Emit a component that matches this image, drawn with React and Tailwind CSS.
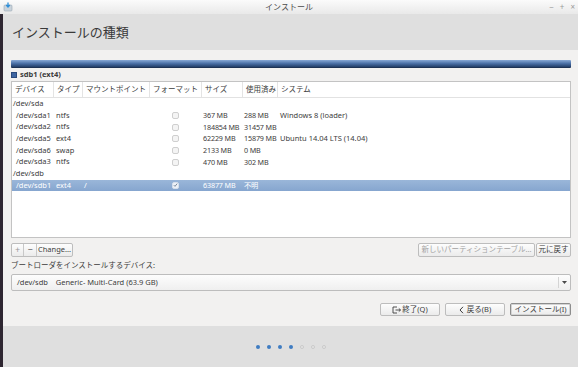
import React from 'react';

const rows = [
  { group: '/dev/sda' },
  { dev: '/dev/sda1', type: 'ntfs', mount: '', size: '367 MB', used: '288 MB', sys: 'Windows 8 (loader)' },
  { dev: '/dev/sda2', type: 'ntfs', mount: '', size: '184854 MB', used: '31457 MB', sys: '' },
  { dev: '/dev/sda5', type: 'ext4', mount: '', size: '62229 MB', used: '15879 MB', sys: 'Ubuntu 14.04 LTS (14.04)' },
  { dev: '/dev/sda6', type: 'swap', mount: '', size: '2133 MB', used: '0 MB', sys: '' },
  { dev: '/dev/sda3', type: 'ntfs', mount: '', size: '470 MB', used: '302 MB', sys: '' },
  { group: '/dev/sdb' },
  { dev: '/dev/sdb1', type: 'ext4', mount: '/', size: '63877 MB', used: '不明', sys: '', selected: true, checked: true },
];

const cols = 'grid grid-cols-[41px_29px_67px_52px_41px_35px_1fr]';

const Checkbox = ({ checked }) => (
  <div
    className={`w-[7px] h-[7px] rounded-[2px] border flex items-center justify-center ${
      checked ? 'border-[#d6dfeb] bg-[#eef2f8]' : 'border-[#cfcfcf] bg-[#f4f4f4]'
    }`}
  >
    {checked && (
      <svg width="6" height="6" viewBox="0 0 6 6">
        <path d="M1 3.2 L2.4 4.6 L5 1.4" stroke="#6f7f93" strokeWidth="1.1" fill="none" />
      </svg>
    )}
  </div>
);

const Button = ({ children, className = '', focused }) => (
  <div
    className={`flex items-center justify-center rounded-[2px] border bg-gradient-to-b from-[#fdfdfd] to-[#ebebeb] text-[7.5px] text-[#3c3c3c] ${
      focused ? 'border-[#8d8d8d] shadow-[inset_0_0_0_1px_#d4d4d4]' : 'border-[#bdbdbd]'
    } ${className}`}
  >
    {children}
  </div>
);

const App = () => {
  return (
    <div className="w-[578px] h-[367px] flex flex-col overflow-hidden font-['Noto_Sans','Noto_Sans_CJK_JP',sans-serif] text-[#3c3c3c]">
      {/* Title bar */}
      <div className="h-[14px] shrink-0 relative flex items-center bg-gradient-to-b from-[#fbfbfb] to-[#e9e9e9]">
        <svg className="absolute left-[3px] top-[2px]" width="10" height="10" viewBox="0 0 10 10">
          <rect x="1" y="3" width="8" height="6" rx="1" fill="#c9d3dc" stroke="#9aa7b3" strokeWidth="0.6" />
          <path d="M5 0.5 V4.5 M3.2 3 L5 5 L6.8 3" stroke="#2f8fd8" strokeWidth="1.3" fill="none" />
        </svg>
        <div className="flex-1 text-center text-[8px] text-[#4a4a4a] leading-none">インストール</div>
        <div className="absolute right-[3px] top-0 h-[14px] flex items-center gap-[6px] text-[8px] text-[#9a9a9a] leading-none">
          <span>−</span>
          <span>+</span>
          <span>×</span>
        </div>
      </div>

      <div className="flex-1 flex">
        {/* desktop edge */}
        <div className="w-[3px] bg-[#2e2631]" />

        <div className="flex-1 flex flex-col">
          {/* Header */}
          <div className="h-[36px] shrink-0 bg-[#dfdfdf] flex items-center pl-[9px]">
            <span className="text-[13px] text-[#3a3a3a] leading-none">インストールの種類</span>
          </div>

          {/* Content */}
          <div className="h-[276px] shrink-0 bg-[#f2f1f0] pl-[8px] pr-[7px] pt-[10px] flex flex-col">
            {/* partition bar */}
            <div className="h-[8px] rounded-[1px] bg-gradient-to-b from-[#8aaad6] via-[#4b70a6] to-[#233f69] border-b border-[#1e3354]" />

            {/* legend */}
            <div className="mt-[3px] h-[8px] flex items-center gap-[3px]">
              <div className="w-[6px] h-[6px] bg-[#3d64a0] border border-[#2a4a7c]" />
              <span className="text-[7.5px] font-bold leading-none">sdb1 (ext4)</span>
            </div>

            {/* table */}
            <div className="mt-[2px] h-[157px] border border-[#c3c3c3] bg-white flex flex-col text-[7.5px] leading-none">
              <div className={`${cols} h-[16px] border-b border-[#e2e2e2] shrink-0`}>
                {['デバイス', 'タイプ', 'マウントポイント', 'フォーマット', 'サイズ', '使用済み', 'システム'].map((h, i) => (
                  <div
                    key={h}
                    className={`flex items-center pl-[3px] ${i > 0 ? 'border-l border-[#e4e4e4]' : ''}`}
                  >
                    {h}
                  </div>
                ))}
              </div>
              {rows.map((r, i) =>
                r.group ? (
                  <div key={i} className="h-[11.67px] flex items-center pl-[1px]">
                    {r.group}
                  </div>
                ) : (
                  <div
                    key={i}
                    className={`${cols} h-[11.67px] items-center text-[7.2px] ${
                      r.selected ? 'bg-gradient-to-b from-[#9ab6d9] to-[#86a6cf] text-white' : ''
                    }`}
                  >
                    <div className="pl-[4px] text-[7.5px]">{r.dev}</div>
                    <div className="pl-[3px] text-[7.5px]">{r.type}</div>
                    <div className="pl-[2px] text-[7.5px]">{r.mount}</div>
                    <div className="flex justify-center">
                      <Checkbox checked={r.checked} />
                    </div>
                    <div className="pl-[2px] whitespace-nowrap tracking-[-0.15px]">{r.size}</div>
                    <div className="pl-[2px] whitespace-nowrap tracking-[-0.15px]">{r.used}</div>
                    <div className="pl-[3px] whitespace-nowrap text-[7.5px]">{r.sys}</div>
                  </div>
                )
              )}
            </div>

            {/* table buttons */}
            <div className="mt-[5px] h-[14px] flex">
              <div className="flex rounded-[2px] border border-[#bdbdbd] bg-gradient-to-b from-[#fdfdfd] to-[#ebebeb] text-[7.5px]">
                <div className="w-[12px] flex items-center justify-center text-[#9a9a9a] text-[9px] border-r border-[#c8c8c8]">+</div>
                <div className="w-[13px] flex items-center justify-center text-[#555] text-[9px] border-r border-[#c8c8c8]">−</div>
                <div className="w-[35px] flex items-center justify-center">Change...</div>
              </div>
              <div className="flex-1" />
              <Button className="w-[117px] text-[#a3a3a3]">新しいパーティションテーブル...</Button>
              <Button className="w-[35px] ml-[1px]">元に戻す</Button>
            </div>

            {/* boot loader label */}
            <div className="mt-[4px] h-[10px] flex items-center text-[7.5px] leading-none">
              ブートローダをインストールするデバイス:
            </div>

            {/* dropdown */}
            <div className="mt-[3px] h-[17px] flex items-center rounded-[2px] border border-[#bdbdbd] bg-gradient-to-b from-[#fdfdfd] to-[#efefef] text-[7.5px] leading-none">
              <span className="pl-[5px] flex-1 whitespace-pre">/dev/sdb    Generic- Multi-Card (63.9 GB)</span>
              <div className="h-[11px] border-l border-[#d4d4d4]" />
              <div className="w-[11px] flex items-center justify-center">
                <svg width="5" height="3" viewBox="0 0 5 3">
                  <path d="M0 0 H5 L2.5 3 Z" fill="#4a4a4a" />
                </svg>
              </div>
            </div>

            {/* nav buttons */}
            <div className="mt-[12px] h-[13px] flex justify-end gap-[5px]">
              <Button className="w-[60px] gap-[1px]">
                <svg width="9" height="8" viewBox="0 0 9 8">
                  <path d="M5 1 H1 V7 H5" stroke="#3c3c3c" strokeWidth="0.9" fill="none" />
                  <path d="M3.5 4 H8.5 M6.8 2.4 L8.5 4 L6.8 5.6" stroke="#3c3c3c" strokeWidth="0.9" fill="none" />
                </svg>
                <span>終了(Q)</span>
              </Button>
              <Button className="w-[60px] gap-[3px]">
                <svg width="5" height="8" viewBox="0 0 5 8">
                  <path d="M4 0.8 L1 4 L4 7.2" stroke="#3c3c3c" strokeWidth="1" fill="none" />
                </svg>
                <span>戻る(B)</span>
              </Button>
              <Button className="w-[61px]" focused>
                インストール(I)
              </Button>
            </div>
          </div>

          {/* Footer with progress dots */}
          <div className="flex-1 bg-[#dfdfdf] flex justify-center pt-[19px] pl-[1px]">
            <div className="flex gap-[7px] h-[4px]">
              {[0, 1, 2, 3, 4, 5, 6].map((i) => (
                <div
                  key={i}
                  className={`w-[4px] h-[4px] rounded-full ${
                    i < 4 ? 'bg-[#3f7cc2]' : 'border border-[#cacaca] bg-[#e6e6e6]'
                  }`}
                />
              ))}
            </div>
          </div>
        </div>
      </div>
    </div>
  );
};

export default App;
